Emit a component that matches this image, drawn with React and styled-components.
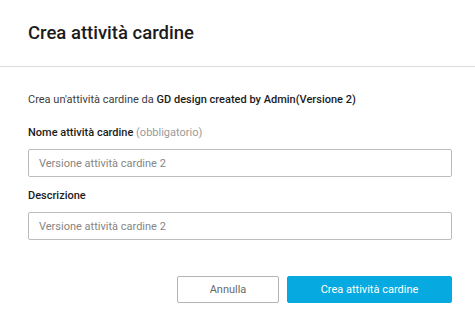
import React from "react";
import styled, { createGlobalStyle } from "styled-components";

const Global = createGlobalStyle`
  html, body { margin: 0; padding: 0; background: #fff; }
  body { font-family: Roboto, "Noto Sans", sans-serif; color: #3c3c3c; }
  * { box-sizing: border-box; }
`;

const Dialog = styled.div`
  width: 475px;
  height: 327px;
  background: #fff;
  display: flex;
  flex-direction: column;
`;

const Header = styled.div`
  height: 67px;
  padding: 0 28px;
  display: flex;
  align-items: center;
  border-bottom: 1px solid #dcdcdc;
`;

const Title = styled.h1`
  margin: 0;
  font-size: 18.5px;
  font-weight: 500;
  color: #1c1c1c;
  padding-bottom: 1px;
`;

const Body = styled.div`
  padding: 25px 23px 0 28px;
  display: flex;
  flex-direction: column;
`;

const Intro = styled.p`
  margin: 0 0 17px;
  font-size: 11px;
  line-height: 16px;
  color: #3c3c3c;
`;

const Strong = styled.strong`
  font-weight: 500;
  color: #1c1c1c;
`;

const Label = styled.label`
  font-size: 11px;
  line-height: 16px;
  font-weight: 500;
  color: #1c1c1c;
  margin-bottom: 8px;
`;

const Hint = styled.span`
  font-weight: 400;
  color: #9a9a9a;
`;

const Input = styled.input`
  width: 424px;
  height: 28px;
  border: 1px solid #bcbcbc;
  border-radius: 2px;
  padding: 0 10px;
  font-family: inherit;
  font-size: 11px;
  color: #3c3c3c;
  margin-bottom: ${(p) => p.$mb || 0}px;
  outline: none;
  &::placeholder { color: #858585; }
`;

const Footer = styled.div`
  margin-top: 36px;
  padding: 0 23px 0 28px;
  display: flex;
  justify-content: flex-end;
  gap: 8px;
`;

const Button = styled.button`
  height: 27px;
  width: ${(p) => p.$w}px;
  border-radius: 2px;
  font-family: inherit;
  font-size: 11px;
  cursor: pointer;
  border: 1px solid ${(p) => (p.$primary ? "#06a9e0" : "#b4b4b4")};
  background: ${(p) => (p.$primary ? "#06a9e0" : "#fff")};
  color: ${(p) => (p.$primary ? "#fff" : "#6a6a6a")};
`;

export default function App() {
  return (
    <Dialog>
      <Global />
      <Header>
        <Title>Crea attività cardine</Title>
      </Header>
      <Body>
        <Intro>
          Crea un'attività cardine da <Strong>GD design created by Admin(Versione 2)</Strong>
        </Intro>
        <Label>
          Nome attività cardine <Hint>(obbligatorio)</Hint>
        </Label>
        <Input placeholder="Versione attività cardine 2" $mb={11} />
        <Label>Descrizione</Label>
        <Input placeholder="Versione attività cardine 2" />
      </Body>
      <Footer>
        <Button $w={102}>Annulla</Button>
        <Button $primary $w={165}>Crea attività cardine</Button>
      </Footer>
    </Dialog>
  );
}
